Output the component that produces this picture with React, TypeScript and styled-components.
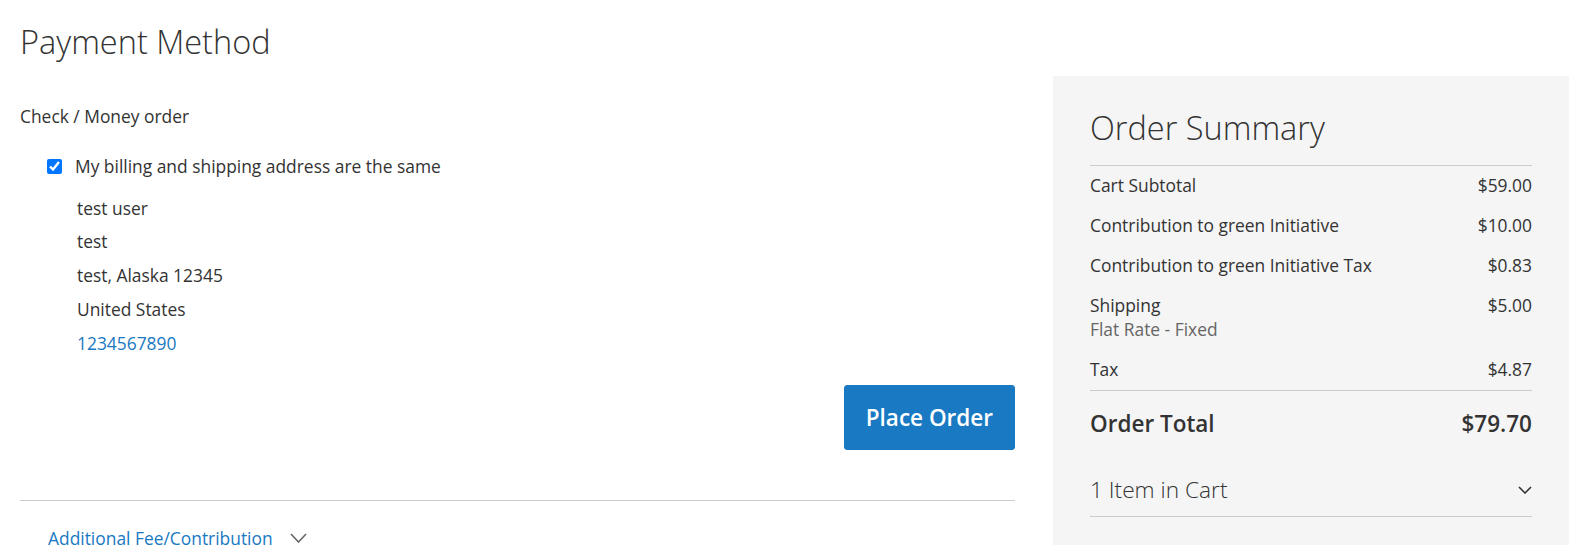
import React from 'react';
import styled, { createGlobalStyle } from "styled-components";

const GlobalStyle = createGlobalStyle`
  body {
    margin: 0;
    background: #fff;
    color: #333;
    font-family: "Open Sans", "Noto Sans", sans-serif;
    font-size: 17.4px;
  }
`;

const Page = styled.div`
  display: flex;
  align-items: flex-start;
  gap: 38px;
  padding: 0 15px 0 20px;
`;

const Main = styled.div`
  flex: none;
  width: 995px;
`;

const StepTitle = styled.h2`
  margin: 0;
  padding-top: 20px;
  font-size: 32.5px;
  font-weight: 300;
  line-height: 44px;
`;

const MethodTitle = styled.div`
  margin-top: 40px;
  line-height: 24px;
`;

const CheckRow = styled.label`
  display: flex;
  align-items: center;
  margin: 26px 0 0 27px;
  line-height: 24px;

  input {
    width: 15px;
    height: 15px;
    margin: 0 13px 0 0;
    accent-color: #0075ff;
  }
`;

const Address = styled.div`
  margin-top: 13.5px;
  padding-left: 57px;
  line-height: 33.8px;

  a {
    color: #1979c3;
    text-decoration: none;
  }
`;

const Actions = styled.div`
  display: flex;
  justify-content: flex-end;
  margin-top: 24.5px;
`;

const PrimaryButton = styled.button`
  height: 65px;
  padding: 0 21px;
  border: 1px solid #1979c3;
  border-radius: 3px;
  background: #1979c3;
  color: #fff;
  font-family: inherit;
  font-size: 22.5px;
  font-weight: 600;
`;

const Divider = styled.hr`
  margin: 50px 0 0;
  border: 0;
  border-top: 1px solid #ccc;
`;

const Toggle = styled.div<{ $tone: string }>`
  display: flex;
  align-items: center;
  gap: 17px;
  color: ${(p) => p.$tone};
`;

const DiscountToggle = styled(Toggle)`
  margin-top: 25.5px;
  padding-left: 28px;
  line-height: 24px;

  span {
    color: #1979c3;
  }
`;

const Sidebar = styled.aside`
  flex: none;
  box-sizing: border-box;
  width: 516px;
  margin-top: 76px;
  padding: 30px 37px 28px;
  background: #f5f5f5;
`;

const SummaryTitle = styled.h2`
  margin: 0;
  padding-bottom: 15px;
  border-bottom: 1px solid #ccc;
  font-size: 32.5px;
  font-weight: 300;
  line-height: 44px;
`;

const Totals = styled.div`
  border-bottom: 1px solid #ccc;
`;

const TotalRow = styled.div`
  display: flex;
  justify-content: space-between;
  padding: 7px 0 9px;
  line-height: 24px;
`;

const Note = styled.div`
  color: #666;
`;

const GrandTotal = styled.div`
  display: flex;
  justify-content: space-between;
  padding: 18px 0;
  font-size: 22.5px;
  font-weight: 600;
  line-height: 30px;
`;

const ItemsToggle = styled(Toggle)`
  justify-content: space-between;
  margin-top: 17px;
  padding-bottom: 10px;
  border-bottom: 1px solid #ccc;
  font-size: 22.7px;
  font-weight: 300;
  line-height: 32px;
`;

const Chevron = ({ w, h, color }: { w: number; h: number; color: string }) => (
  <svg width={w} height={h} viewBox={`0 0 ${w} ${h}`} fill="none">
    <polyline
      points={`1,1 ${w / 2},${h - 1} ${w - 1},1`}
      stroke={color}
      strokeWidth="1.6"
    />
  </svg>
);

const totals = [
  { label: "Cart Subtotal", value: "$59.00" },
  { label: "Contribution to green Initiative", value: "$10.00" },
  { label: "Contribution to green Initiative Tax", value: "$0.83" },
  { label: "Shipping", value: "$5.00", note: "Flat Rate - Fixed" },
  { label: "Tax", value: "$4.87" },
];

export default function App() {
  return (
    <>
      <GlobalStyle />
      <Page>
        <Main>
          <StepTitle>Payment Method</StepTitle>
          <MethodTitle>Check / Money order</MethodTitle>
          <CheckRow>
            <input type="checkbox" defaultChecked />
            My billing and shipping address are the same
          </CheckRow>
          <Address>
            <div>test user</div>
            <div>test</div>
            <div>test, Alaska 12345</div>
            <div>United States</div>
            <div><a href="#">1234567890</a></div>
          </Address>
          <Actions>
            <PrimaryButton>Place Order</PrimaryButton>
          </Actions>
          <Divider />
          <DiscountToggle $tone="#666">
            <span>Additional Fee/Contribution</span>
            <Chevron w={17} h={10} color="#666" />
          </DiscountToggle>
        </Main>

        <Sidebar>
          <SummaryTitle>Order Summary</SummaryTitle>
          <Totals>
            {totals.map((t) => (
              <TotalRow key={t.label}>
                <div>
                  {t.label}
                  {t.note && <Note>{t.note}</Note>}
                </div>
                <div>{t.value}</div>
              </TotalRow>
            ))}
          </Totals>
          <GrandTotal>
            <span>Order Total</span>
            <span>$79.70</span>
          </GrandTotal>
          <ItemsToggle $tone="#333">
            <span>1 Item in Cart</span>
            <Chevron w={14} h={8} color="#333" />
          </ItemsToggle>
        </Sidebar>
      </Page>
    </>
  );
}
